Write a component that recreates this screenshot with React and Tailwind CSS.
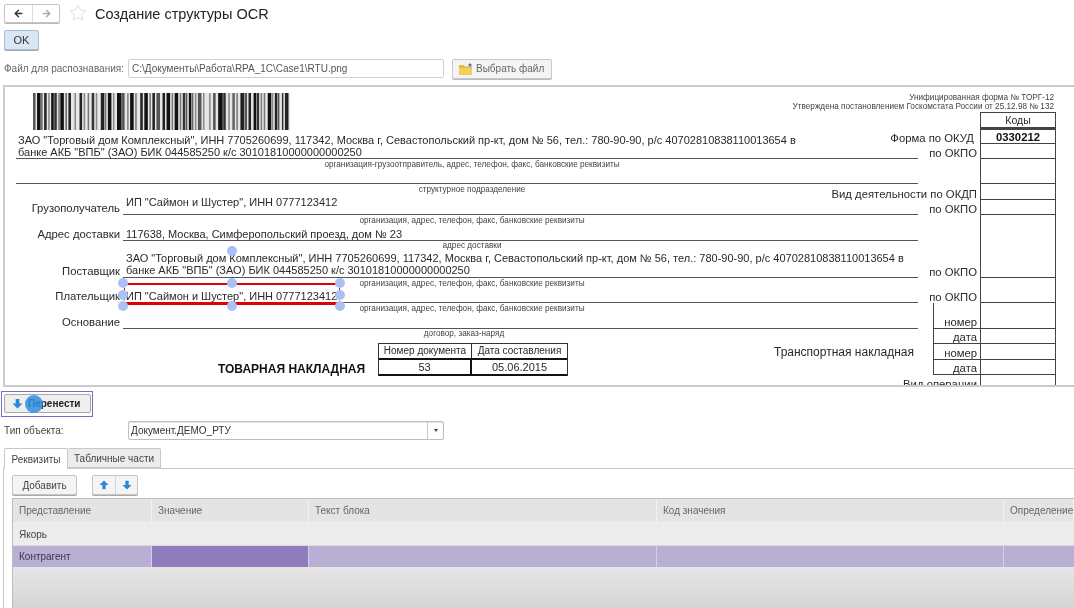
import {ArrowLeft, ArrowRight, Star} from 'lucide-react';

const BARS = [
  [4, 2, '#555'], [8, 3, '#111'], [12, 1, '#666'], [15, 2, '#222'], [19, 1, '#888'], [22, 2, '#111'], [25, 2, '#333'],
  [29, 1, '#777'], [31, 3, '#111'], [36, 1, '#666'], [39, 2, '#222'], [45, 1, '#888'], [50, 2, '#222'], [54, 1, '#888'],
  [58, 1, '#777'], [62, 2, '#333'], [66, 1, '#888'], [71, 3, '#222'], [75, 1, '#777'], [78, 3, '#111'], [83, 1, '#888'],
  [87, 4, '#111'], [92, 2, '#555'], [97, 1, '#888'], [100, 3, '#111'], [105, 1, '#777'], [110, 2, '#222'], [114, 3, '#111'],
  [119, 1, '#777'], [122, 2, '#222'], [126, 3, '#555'], [132, 2, '#222'], [136, 3, '#111'], [141, 1, '#777'], [144, 3, '#111'],
  [149, 1, '#777'], [152, 2, '#333'], [155, 1, '#555'], [158, 2, '#111'], [161, 1, '#666'], [164, 1, '#888'], [167, 3, '#555'],
  [172, 1, '#888'], [178, 1, '#888'], [182, 2, '#555'], [187, 4, '#111'], [192, 2, '#333'], [197, 1, '#888'], [201, 2, '#666'],
  [205, 1, '#777'], [209, 3, '#222'], [213, 2, '#555'], [217, 2, '#222'], [222, 2, '#111'], [225, 2, '#333'], [229, 1, '#777'],
  [232, 1, '#777'], [236, 3, '#111'], [240, 1, '#888'], [243, 2, '#222'], [246, 1, '#555'], [250, 1, '#333'], [253, 3, '#222'],
];

const HANDLES = [
  'left-[222px] top-[159px]',
  'left-[113px] top-[191px]',
  'left-[222px] top-[191px]',
  'left-[330px] top-[191px]',
  'left-[113px] top-[203px]',
  'left-[330px] top-[203px]',
  'left-[113px] top-[214px]',
  'left-[222px] top-[214px]',
  'left-[330px] top-[214px]',
];

const CODE_ROWS = [
  {h: 'h-[16px]', label: '', code: 'Коды', top: true},
  {h: 'h-[16px]', label: 'Форма по ОКУД', code: '0330212', strong: true},
  {h: 'h-[15px]', label: 'по ОКПО'},
  {h: 'h-[25px]'},
  {h: 'h-[16px]', label: 'Вид деятельности по ОКДП'},
  {h: 'h-[15px]', label: 'по ОКПО'},
  {h: 'h-[63px]', label: 'по ОКПО'},
  {h: 'h-[25px]', label: 'по ОКПО'},
  {h: 'h-[26px]', label: 'номер', box: true},
  {h: 'h-[15px]', label: 'дата', box: true},
  {h: 'h-[16px]', label: 'номер', box: true},
  {h: 'h-[15px]', label: 'дата', box: true},
  {h: 'h-[15px]', label: 'Вид операции'},
];

const COLS = 'grid grid-cols-[139px_157px_348px_347px_1fr]';

function App() {
  return (
    <div className="h-[608px] w-[1074px] overflow-hidden bg-white font-['Liberation_Sans',Arial,sans-serif] text-[10px] text-[#444] blur-[0.5px]">
      <TopBar />
      <FileRow />
      <Document />
      <div className="relative ml-[1px] mt-[4px] h-[26px] w-[92px] border border-[#7b6cc4] p-[2px]">
        <button className="flex h-[19px] w-[87px] items-center rounded-[2px] border border-[#a8a8a8] bg-[#efefef] pl-[7px] text-[10px] font-bold text-[#222]">
          <BlueArrow down className="mr-[5px] h-[11px] w-[11px]" />
          Перенести
        </button>
        <span className="absolute left-[23px] top-[3px] h-[18px] w-[18px] rounded-full bg-[#2d8fe2]/85" />
      </div>
      <div className="mt-[4px] flex h-[19px] items-center pl-[4px]">
        <span className="w-[124px]">Тип объекта:</span>
        <div className="flex h-[19px] w-[316px] items-center rounded-[2px] border border-[#bdbdbd] pl-[2px] text-[10px] text-[#333] shadow-[inset_0_1px_1px_#e4e4e4]">
          <span className="flex-1">Документ.ДЕМО_РТУ</span>
          <span className="flex h-full w-[16px] items-center justify-center border-l border-[#c8c8c8]">
            <span className="border-x-[2.5px] border-t-[3px] border-x-transparent border-t-[#444]" />
          </span>
        </div>
      </div>
      <div className="mt-[8px] flex h-[20px] pl-[4px]">
        <div className="relative z-10 flex h-[21px] w-[64px] items-center justify-center rounded-t-[2px] border border-b-0 border-[#c8c8c8] bg-white">
          Реквизиты
        </div>
        <div className="flex w-[93px] items-center justify-center rounded-t-[2px] border border-l-0 border-[#c8c8c8] bg-[#ececec]">
          Табличные части
        </div>
      </div>
      <Panel />
    </div>
  );
}

const TopBar = () => {
  return (
    <>
      <div className="flex h-[23px] items-end pl-[4px]">
        <div className="flex h-[19px] w-[56px] rounded-[2px] border border-[#c4c4c4] shadow-[0_1px_0_#bbb]">
          <span className="flex w-[28px] items-center justify-center border-r border-[#ddd]">
            <ArrowLeft size={11} strokeWidth={3} color="#333" />
          </span>
          <span className="flex flex-1 items-center justify-center">
            <ArrowRight size={11} strokeWidth={3} color="#aaa" />
          </span>
        </div>
        <Star size={18} strokeWidth={1} color="#d0d0d0" className="mb-[1px] ml-[9px]" />
        <h1 className="-mb-[1px] ml-[8px] text-[14.5px] leading-[19px] text-[#222]">Создание структуры OCR</h1>
      </div>
      <button className="ml-[4px] mt-[7px] block h-[20px] w-[35px] rounded-[2px] border border-[#a9bcd4] bg-[#d9e6f5] text-[11px] text-[#333] shadow-[0_1px_0_#aaa]">
        OK
      </button>
    </>
  );
};

const FileRow = () => {
  return (
    <div className="mt-[9px] flex h-[19px] items-center pl-[4px]">
      <span className="w-[124px] whitespace-nowrap text-[#666]">Файл для распознавания:</span>
      <div className="flex h-[19px] w-[316px] items-center rounded-[2px] border border-[#d0d0d0] pl-[3px] text-[#555]">
        C:\Документы\Работа\RPA_1C\Case1\RTU.png
      </div>
      <button className="ml-[8px] flex h-[20px] w-[100px] items-center rounded-[2px] border border-[#c8c8c8] bg-[#f4f4f4] pl-[6px] text-[#666] shadow-[0_1px_0_#bbb]">
        <svg viewBox="0 0 14 12" className="mr-[3px] h-[12px] w-[14px]">
          <path d="M0 2h5l1 1.500h7V12H0z" fill="#e8b93a" />
          <path d="M0 5h13v7H0z" fill="#f4cf5c" />
          <path d="M11 0l1 1.500 1.500.5-1.500.5-1 1.500-1-1.500-1.500-.5 1.500-.5z" fill="#2f6fc0" />
        </svg>
        Выбрать файл
      </button>
    </div>
  );
};

const Document = () => {
  return (
    <div className="relative ml-[3px] mt-[7px] h-[302px] overflow-hidden border-y-2 border-l-2 border-[#cbcbcb] text-[11.3px] leading-[12px] text-[#2a2a2a]">
      <div className="flex">
        <LeftForm />
        <CodesColumn />
      </div>
      <Selection />
    </div>
  );
};

const LeftForm = () => {
  return (
    <div className="ml-[11px] w-[902px] shrink-0">
      <svg viewBox="0 0 254 37" preserveAspectRatio="none" className="ml-[17px] mt-[6px] block h-[37px] w-[257px]">
        <rect x="0" y="0" width="254" height="37" fill="#e6e6e6" />
        {BARS.map(([x, w, fill]) => (
          <rect key={x} x={x - 4} y="0" width={w + 0.5} height="37" fill={fill} />
        ))}
      </svg>
      <div className="mt-[4px] h-[25px] border-b border-[#555] pl-[2px] text-[11px]">
        ЗАО "Торговый дом Комплексный", ИНН 7705260699, 117342, Москва г, Севастопольский пр-кт, дом № 56, тел.: 780-90-90, р/с 40702810838110013654 в
        <br />
        банке АКБ "ВПБ" (ЗАО) БИК 044585250 к/с 30101810000000000250
      </div>
      <Caption h="h-[12px]">организация-грузоотправитель, адрес, телефон, факс, банковские реквизиты</Caption>
      <div className="h-[13px] border-b border-[#555]" />
      <Caption h="h-[11px]">структурное подразделение</Caption>
      <Field label="Грузополучатель" h="h-[20px]">ИП "Саймон и Шустер", ИНН 0777123412</Field>
      <Caption h="h-[12px]">организация, адрес, телефон, факс, банковские реквизиты</Caption>
      <Field label="Адрес доставки" h="h-[14px]">117638, Москва, Симферопольский проезд, дом № 23</Field>
      <Caption h="h-[10px]">адрес доставки</Caption>
      <Field label="Поставщик" h="h-[27px]">
        ЗАО "Торговый дом Комплексный", ИНН 7705260699, 117342, Москва г, Севастопольский пр-кт, дом № 56, тел.: 780-90-90, р/с 40702810838110013654 в
        <br />
        банке АКБ "ВПБ" (ЗАО) БИК 044585250 к/с 30101810000000000250
      </Field>
      <Caption h="h-[11px]">организация, адрес, телефон, факс, банковские реквизиты</Caption>
      <Field label="Плательщик" h="h-[14px]">ИП "Саймон и Шустер", ИНН 0777123412</Field>
      <Caption h="h-[11px]">организация, адрес, телефон, факс, банковские реквизиты</Caption>
      <Field label="Основание" h="h-[15px]" />
      <div className="flex h-[10px] items-center justify-center pr-[6px] text-[8.2px] text-[#444]">договор, заказ-наряд</div>
      <div className="mt-[4px] flex h-[33px] items-end">
        <span className="mb-[1px] ml-[202px] w-[160px] whitespace-nowrap text-[12px] font-bold text-[#111]">ТОВАРНАЯ НАКЛАДНАЯ</span>
        <div className="w-[190px] border-x border-t border-[#333] text-[10px]">
          <div className="grid h-[16px] grid-cols-[93px_1fr] border-b-2 border-[#111]">
            <span className="flex items-center justify-center border-r border-[#333]">Номер документа</span>
            <span className="flex items-center justify-center">Дата составления</span>
          </div>
          <div className="grid h-[16px] grid-cols-[93px_1fr] border-b-2 border-[#111] text-[11px]">
            <span className="flex items-center justify-center border-r-2 border-[#111]">53</span>
            <span className="flex items-center justify-center">05.06.2015</span>
          </div>
        </div>
        <span className="mb-[18px] ml-auto mr-[4px] whitespace-nowrap text-[12px]">Транспортная накладная</span>
      </div>
    </div>
  );
};

const Caption = ({h, children}) => {
  return <div className={`${h} flex items-center justify-center whitespace-nowrap pl-[10px] text-[8.2px] text-[#444]`}>{children}</div>;
};

const Field = ({label, h, children}) => {
  return (
    <div className={`${h} flex items-end`}>
      <span className="w-[107px] shrink-0 whitespace-nowrap pb-[1px] pr-[3px] text-right">{label}</span>
      <div className="h-full flex-1 whitespace-nowrap border-b border-[#555] pl-[3px] pt-[1px] text-[11px]">{children}</div>
    </div>
  );
};

const CodesColumn = () => {
  return (
    <div className="w-[138px] shrink-0">
      <div className="h-[25px] pt-[6px] text-[8.2px] leading-[9px] text-[#444]">
        <div className="flex justify-end whitespace-nowrap pr-[2px]">Унифицированная форма № ТОРГ-12</div>
        <div className="flex justify-end whitespace-nowrap pr-[2px]">Утверждена постановлением Госкомстата России от 25.12.98 № 132</div>
      </div>
      {CODE_ROWS.map((r, i) => (
        <div key={i} className={`${r.h} flex`}>
          <div
            className={`flex shrink-0 items-end justify-end whitespace-nowrap ${r.strong ? 'pr-[6px]' : 'pr-[3px]'} ${
              r.box ? 'ml-[15px] w-[47px] border-l border-b border-[#444]' : 'w-[62px]'
            }`}
          >
            {r.label}
          </div>
          <div
            className={`flex w-[76px] shrink-0 items-center justify-center border-x border-b border-[#444] ${r.top ? 'border-t' : ''} ${
              r.strong ? 'border-2 border-[#111] font-bold text-[#111]' : ''
            } ${r.top ? 'text-[10.5px]' : ''}`}
          >
            {r.code}
          </div>
        </div>
      ))}
    </div>
  );
};

const Selection = () => {
  return (
    <>
      <div className="absolute left-[119px] top-[196px] h-[22px] w-[216px] border-x border-dashed border-[#c01010]">
        <div className="absolute -left-[1px] -right-[1px] top-0 h-[2px] bg-[#e00000]" />
        <div className="absolute -left-[1px] -right-[1px] bottom-0 h-[3px] bg-[#e00000]" />
      </div>
      {HANDLES.map((pos) => (
        <span key={pos} className={`absolute ${pos} h-[10px] w-[10px] rounded-full bg-[#a9c1f4]`} />
      ))}
    </>
  );
};

const BlueArrow = ({down, className}) => {
  return (
    <svg viewBox="0 0 12 12" className={className}>
      <path d={down ? 'M4 1h4v5h3.500L6 11.500.5 6H4z' : 'M4 11h4V6h3.500L6 .5.5 6H4z'} fill="#2f86d6" />
    </svg>
  );
};

const Panel = () => {
  return (
    <div className="ml-[3px] h-[140px] border-l border-t border-[#c8c8c8] pl-[8px] pt-[6px]">
      <div className="flex h-[20px]">
        <button className="h-[20px] w-[65px] rounded-[2px] border border-[#c4c4c4] bg-[#f4f4f4] text-[#444] shadow-[0_1px_0_#aaa]">Добавить</button>
        <div className="ml-[15px] flex h-[20px] w-[46px] rounded-[2px] border border-[#c4c4c4] bg-[#f4f4f4] shadow-[0_1px_0_#aaa]">
          <span className="flex w-[23px] items-center justify-center border-r border-[#d4d4d4]">
            <BlueArrow className="h-[10px] w-[10px]" />
          </span>
          <span className="flex flex-1 items-center justify-center">
            <BlueArrow down className="h-[10px] w-[10px]" />
          </span>
        </div>
      </div>
      <div className="mt-[3px] border-l border-t border-[#bdbdbd]">
        <div className={`${COLS} h-[24px] bg-[#e4e4e4] text-[#666]`}>
          {['Представление', 'Значение', 'Текст блока', 'Код значения', 'Определение'].map((t) => (
            <div key={t} className="flex items-center whitespace-nowrap border-b border-r border-[#f2f2f2] pl-[6px]">
              {t}
            </div>
          ))}
        </div>
        <div className="flex h-[23px] items-center border-b border-[#dcdcdc] bg-[#ececec] pl-[6px] text-[#444]">Якорь</div>
        <div className={`${COLS} h-[21px] bg-[#b9aed3] text-[#3a3550]`}>
          <div className="flex items-center border-r border-[#d6d0e4] pl-[6px]">Контрагент</div>
          <div className="border-r border-[#d6d0e4] bg-[#8f7cbc]" />
          <div className="border-r border-[#d6d0e4]" />
          <div className="border-r border-[#d6d0e4]" />
          <div />
        </div>
        <div className="h-[42px] bg-gradient-to-b from-[#e6e6e6] to-[#d4d4d4]" />
      </div>
    </div>
  );
};

export default App;
